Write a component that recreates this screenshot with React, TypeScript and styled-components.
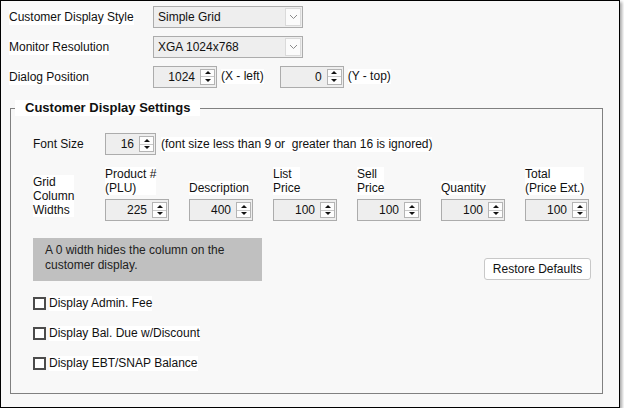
import * as React from "react"
import styled, { createGlobalStyle } from "styled-components"

const GlobalStyle = createGlobalStyle`
    html, body {
        margin: 0;
        padding: 0;
        background: #ffffff;
    }
    body {
        font-family: "Liberation Sans", Arial, sans-serif;
        font-size: 12px;
        color: #111;
    }
`

const Frame = styled.div`
    width: 620px;
    height: 408px;
    box-sizing: border-box;
    border: 1px solid #000;
    background: #f8f8f8;
    box-shadow: 2px 2px 3px rgba(0, 0, 0, 0.35);
    display: flex;
    flex-direction: column;
`

const TopForm = styled.div`
    display: grid;
    grid-template-columns: 144px auto;
    grid-template-rows: 22px 22px 22px;
    row-gap: 8px;
    padding: 5px 0 0 8px;
    align-items: center;
`

const Label = styled.span`
    background: #ffffff;
    justify-self: start;
    line-height: 15px;
`

const InlineRow = styled.div`
    display: flex;
    align-items: center;
    gap: 4px;
    margin-top: -1px;
`

const Select = styled.div`
    width: 150px;
    height: 22px;
    box-sizing: border-box;
    border: 1px solid #acacac;
    background: #eeeeee;
    display: flex;
    align-items: center;
    padding: 0 1px 0 4px;
    font-size: 12px;
`

const SelectText = styled.span`
    flex: 1;
`

const ArrowBox = styled.div`
    width: 16px;
    height: 18px;
    box-sizing: border-box;
    border: 1px solid #dadada;
    background: #fbfbfb;
    display: flex;
    align-items: center;
    justify-content: center;
`

const SpinBox = styled.div<{ $w: number }>`
    width: ${p => p.$w}px;
    height: 22px;
    box-sizing: border-box;
    border: 1px solid #acacac;
    background: #eeeeee;
    display: flex;
    align-items: center;
    padding: 0 1px 0 4px;
`

const SpinValue = styled.span`
    flex: 1;
    text-align: right;
    padding-right: 5px;
    font-size: 12px;
`

const SpinButtons = styled.div`
    width: 15px;
    height: 16px;
    box-sizing: border-box;
    border: 1px solid #b4b4b4;
    background: #fdfdfd;
    display: flex;
    flex-direction: column;
`

const SpinHalf = styled.div<{ $down?: boolean }>`
    flex: 1;
    display: flex;
    align-items: center;
    justify-content: center;
    border-top: ${p => (p.$down ? "1px solid #c8c8c8" : "none")};

    &::after {
        content: "";
        width: 0;
        height: 0;
        border-left: 3px solid transparent;
        border-right: 3px solid transparent;
        ${p => (p.$down ? "border-top: 3px solid #111;" : "border-bottom: 3px solid #111;")}
    }
`

const Hint = styled.span<{ $gapAfter?: number, $gapBefore?: number }>`
    background: #ffffff;
    line-height: 15px;
    margin-right: ${p => p.$gapAfter ?? 0}px;
    margin-left: ${p => p.$gapBefore ?? 0}px;
`

const Group = styled.fieldset`
    margin: 12px 16px 0 9px;
    padding: 17px 11px 15px 22px;
    border: 1px solid #808080;
    display: flex;
    flex-direction: column;
    min-width: 0;
`

const Legend = styled.legend`
    margin-left: -18px;
    padding: 0 10px;
    font-size: 13px;
    font-weight: bold;
    line-height: 16px;
    background: #ffffff;
`

const FontRow = styled.div`
    display: flex;
    align-items: center;
`

const RowLabel = styled.span`
    width: 72px;
`

const ColumnGrid = styled.div`
    display: grid;
    grid-template-columns: 72px repeat(5, 84px) auto;
    grid-template-rows: auto auto;
    row-gap: 4px;
    margin-top: 12px;
`

const GridCaption = styled.span`
    grid-row: 1 / span 2;
    align-self: center;
    justify-self: start;
    background: #ffffff;
    line-height: 14px;
    margin-top: 4px;
`

const ColHeader = styled.span`
    align-self: end;
    justify-self: start;
    line-height: 14px;
    background: #ffffff;
`

const NoteRow = styled.div`
    display: flex;
    justify-content: space-between;
    align-items: flex-end;
    margin-top: 17px;
`

const Note = styled.div`
    width: 229px;
    height: 43px;
    box-sizing: border-box;
    background: #c0c0c0;
    padding: 5px 12px 0;
    line-height: 15px;
    color: #222;
`

const Button = styled.button`
    width: 107px;
    height: 22px;
    margin-bottom: 1px;
    background: #ffffff;
    border: 1px solid #c8c8c8;
    border-radius: 3px;
    font-family: inherit;
    font-size: 12px;
    color: #111;
    padding: 0;
`

const CheckList = styled.div`
    display: flex;
    flex-direction: column;
    margin-top: 7px;
`

const CheckRow = styled.label`
    height: 30px;
    display: flex;
    align-items: center;
    gap: 3px;
`

const CheckBox = styled.span`
    width: 13px;
    height: 13px;
    box-sizing: border-box;
    border: 2px solid #4c4c4c;
    background: #ffffff;
`

const Chevron = () => (
    <svg width="9" height="6" viewBox="0 0 9 6">
        <path d="M1 1 L4.5 4.5 L8 1" fill="none" stroke="#8a8a8a" strokeWidth="1" />
    </svg>
)

const Spinner: React.FC<{ width: number, value: string }> = ({ width, value }) => (
    <SpinBox $w={width}>
        <SpinValue>{value}</SpinValue>
        <SpinButtons>
            <SpinHalf />
            <SpinHalf $down />
        </SpinButtons>
    </SpinBox>
)

const columns = [
    { header: ["Product #", "(PLU)"], value: "225" },
    { header: ["Description"], value: "400" },
    { header: ["List", "Price"], value: "100" },
    { header: ["Sell", "Price"], value: "100" },
    { header: ["Quantity"], value: "100" },
    { header: ["Total", "(Price Ext.)"], value: "100" },
]

const checks = ["Display Admin. Fee", "Display Bal. Due w/Discount", "Display EBT/SNAP Balance"]

export default function App() {
    return (
        <>
            <GlobalStyle />
            <Frame>
                <TopForm>
                    <Label>Customer Display Style</Label>
                    <Select><SelectText>Simple Grid</SelectText><ArrowBox><Chevron /></ArrowBox></Select>
                    <Label>Monitor Resolution</Label>
                    <Select><SelectText>XGA 1024x768</SelectText><ArrowBox><Chevron /></ArrowBox></Select>
                    <Label>Dialog Position</Label>
                    <InlineRow>
                        <Spinner width={64} value="1024" />
                        <Hint $gapAfter={12}>(X - left)</Hint>
                        <Spinner width={64} value="0" />
                        <Hint>(Y - top)</Hint>
                    </InlineRow>
                </TopForm>
                <Group>
                    <Legend>Customer Display Settings</Legend>
                    <FontRow>
                        <RowLabel>Font Size</RowLabel>
                        <Spinner width={51} value="16" />
                        <Hint $gapBefore={5}>(font size less than 9 or&nbsp; greater than 16 is ignored)</Hint>
                    </FontRow>
                    <ColumnGrid>
                        <GridCaption>Grid<br />Column<br />Widths</GridCaption>
                        {columns.map(c => (
                            <ColHeader key={c.header.join(" ")}>
                                {c.header.map((line, i) => <React.Fragment key={line}>{i > 0 && <br />}{line}</React.Fragment>)}
                            </ColHeader>
                        ))}
                        {columns.map(c => (
                            <Spinner key={c.header.join(" ") + "-v"} width={64} value={c.value} />
                        ))}
                    </ColumnGrid>
                    <NoteRow>
                        <Note>A 0 width hides the column on the customer display.</Note>
                        <Button>Restore Defaults</Button>
                    </NoteRow>
                    <CheckList>
                        {checks.map(c => (
                            <CheckRow key={c}>
                                <CheckBox />
                                <Hint>{c}</Hint>
                            </CheckRow>
                        ))}
                    </CheckList>
                </Group>
            </Frame>
        </>
    )
}
